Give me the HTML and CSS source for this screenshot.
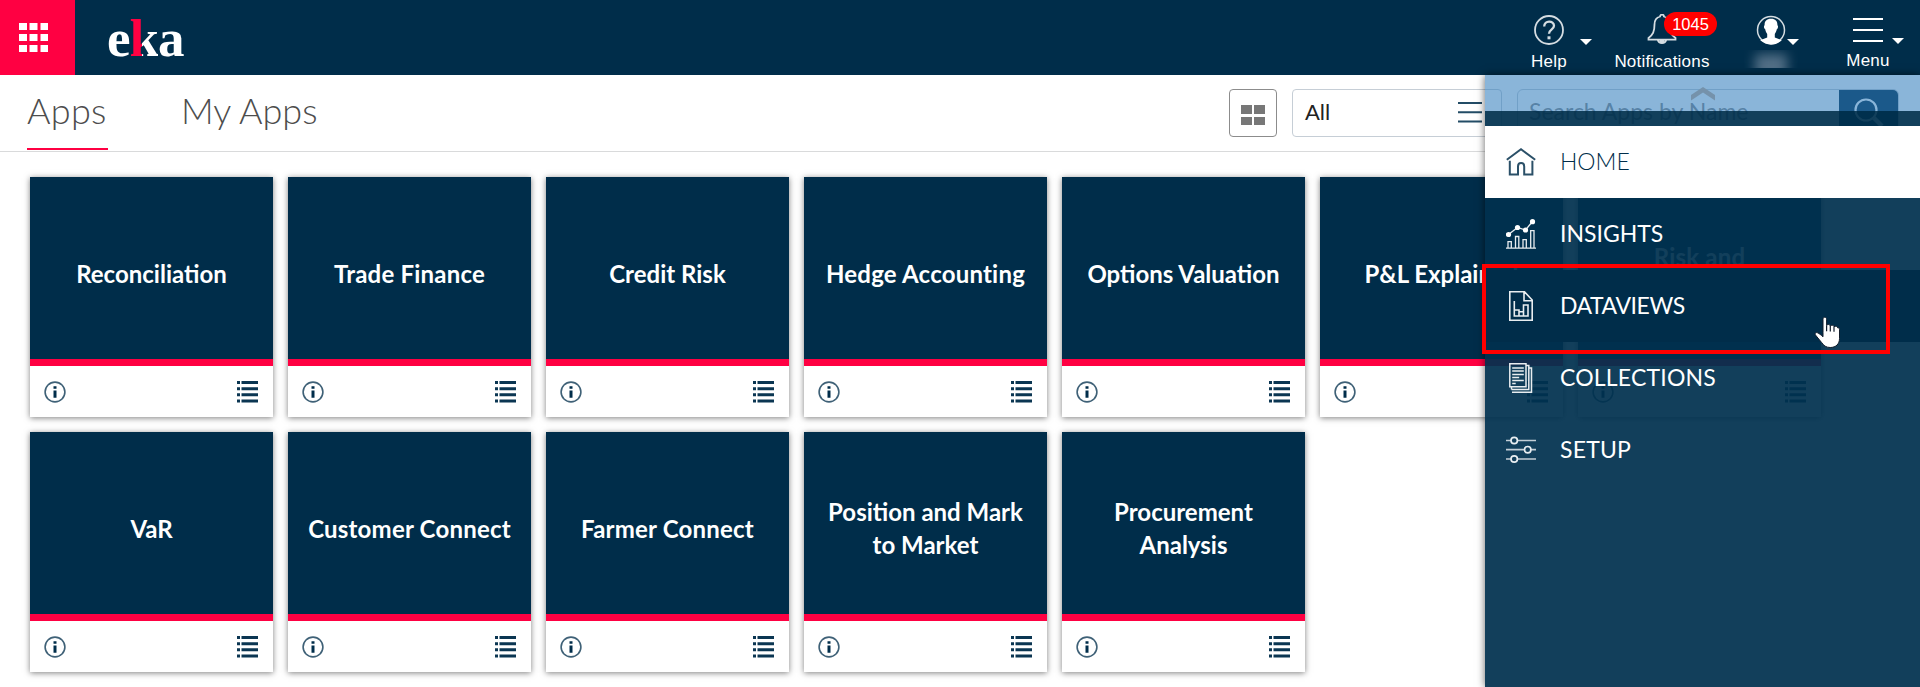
FILE: index.html
```html
<!DOCTYPE html>
<html lang="en">
<head>
<meta charset="utf-8">
<title>eka Apps</title>
<link rel="stylesheet" href="styles.css">
</head>
<body>
<svg class="defs" aria-hidden="true">
  <symbol id="info" viewBox="0 0 22 22">
    <circle cx="11" cy="11" r="9.9" fill="none" stroke="#3f6177" stroke-width="1.6"/>
    <path d="M9.500 5.200h3v2.600h-3zM9.500 9.400h3v7.400h-3z" fill="#002d4a"/>
  </symbol>
  <symbol id="list" viewBox="0 0 21 22">
    <path d="M0 0h3v3H0zM4.500 0H21v3H4.500zM0 6.200h3v3H0zM4.500 6.200H21v3H4.500zM0 12.300h3v3H0zM4.500 12.300H21v3H4.500zM0 18.500h3v3H0zM4.500 18.500H21v3H4.500z" fill="#0b3652"/>
  </symbol>
</svg>

<header class="topbar">
  <div class="launcher">
    <svg width="29" height="29" viewBox="0 0 29 29" fill="#fff"><path d="M0 0h8v7H0zM10.500 0h8v7h-8zM21.500 0H29v7h-7.500zM0 11h8v7H0zM10.500 11h8v7h-8zM21.500 11H29v7h-7.500zM0 22h8v7H0zM10.500 22h8v7h-8zM21.500 22H29v7h-7.500z"/></svg>
  </div>
  <div class="logo">e<span class="logo-k">k</span>a</div>
  <nav class="tools">
    <div class="tool tool-help">
      <div class="tool-icon">
        <svg width="30" height="30" viewBox="0 0 30 30" fill="none" stroke="#d5dde2" stroke-width="1.800"><circle cx="15" cy="15" r="14"/><path d="M10.200 11.500C10.200 5 20 5.200 20 10.800c0 3.600-5 3.500-5 8" stroke-width="2.300"/><path d="M13.500 21.300h3v3h-3z" fill="#d5dde2" stroke="none"/></svg>
        <i class="caret"></i>
      </div>
      <span>Help</span>
    </div>
    <div class="tool tool-bell">
      <div class="tool-icon">
        <svg width="30" height="30" viewBox="0 0 30 30" fill="none" stroke="#d5dde2" stroke-width="1.800"><path d="M13 2.500C13 0 17 0 17 2.500c4 1 5.500 4 5.500 8 0 7 1.500 10 6 13.500v1.700H1.500V24c4.500-3.500 6-6.500 6-13.500 0-4 1.500-7 5.500-8zM10.800 26c1 4 7.400 4 8.400 0"/><path d="M12.500 26h5v2.500h-5z" fill="#d5dde2" stroke="none"/></svg>
        <b class="badge">1045</b>
      </div>
      <span>Notifications</span>
    </div>
    <div class="tool tool-user">
      <div class="tool-icon">
        <svg width="30" height="30" viewBox="0 0 30 30"><circle cx="15" cy="15" r="13.500" fill="none" stroke="#d5dde2" stroke-width="1.500"/><path d="M15 3.800c4.700 0 6.600 2.800 6.400 6.500 1.200.8.500 3.200-.6 4-.4 2.500-1.300 3.500-2 4.700v3.500l7 2.800C22.500 28 19 29.700 15 29.700S7.500 28 4.200 25.300l7-2.800V19c-.8-1.200-1.600-2.200-2-4.700-1.200-.8-1.800-3.200-.6-4-.2-3.700 1.700-6.500 6.400-6.500z" fill="#fff"/></svg>
        <i class="caret"></i>
      </div>
      <div class="redacted"><i></i></div>
    </div>
    <div class="tool tool-menu">
      <div class="tool-icon">
        <svg width="30" height="24" viewBox="0 0 30 24" fill="#fff"><path d="M0 0h30v2H0zM0 11h30v2H0zM0 22h30v2H0z"/></svg>
        <i class="caret"></i>
      </div>
      <span>Menu</span>
    </div>
  </nav>
</header>

<section class="subbar">
  <div class="tabs">
    <a class="tab tab-active">Apps</a>
    <a class="tab tab-mine">My Apps</a>
  </div>
  <div class="filters">
    <div class="view-toggle">
      <svg width="24" height="20" viewBox="0 0 24 20" fill="#777"><path d="M0 0h11v9H0zM13 0h11v9H13zM0 12h11v8H0zM13 12h11v8H13z"/></svg>
    </div>
    <div class="select">
      <span>All</span>
      <svg width="24" height="21" viewBox="0 0 24 21" fill="#234c66"><path d="M0 0h24v2H0zM0 9.300h24v2H0zM0 18.500h24v2H0z"/></svg>
    </div>
    <div class="search">
      <span class="search-text">Search Apps by Name</span>
      <div class="search-btn">
        <svg width="30" height="30" viewBox="0 0 30 30" fill="none" stroke="#fff"><circle cx="12" cy="12" r="10.500" stroke-width="2.200"/><path d="M20 20l8 8" stroke-width="4.500"/></svg>
      </div>
    </div>
  </div>
</section>

<main class="cards">
  <article class="card"><h2>Reconciliation</h2><footer><svg class="ic-info"><use href="#info"/></svg><svg class="ic-list"><use href="#list"/></svg></footer></article>
  <article class="card wide"><h2>Trade Finance</h2><footer><svg class="ic-info"><use href="#info"/></svg><svg class="ic-list"><use href="#list"/></svg></footer></article>
  <article class="card"><h2>Credit Risk</h2><footer><svg class="ic-info"><use href="#info"/></svg><svg class="ic-list"><use href="#list"/></svg></footer></article>
  <article class="card wide"><h2>Hedge Accounting</h2><footer><svg class="ic-info"><use href="#info"/></svg><svg class="ic-list"><use href="#list"/></svg></footer></article>
  <article class="card"><h2>Options Valuation</h2><footer><svg class="ic-info"><use href="#info"/></svg><svg class="ic-list"><use href="#list"/></svg></footer></article>
  <article class="card"><h2>P&amp;L Explained</h2><footer><svg class="ic-info"><use href="#info"/></svg><svg class="ic-list"><use href="#list"/></svg></footer></article>
  <article class="card wide"><h2>Risk and<br>&nbsp;</h2><footer><svg class="ic-info"><use href="#info"/></svg><svg class="ic-list"><use href="#list"/></svg></footer></article>
  <article class="card"><h2>VaR</h2><footer><svg class="ic-info"><use href="#info"/></svg><svg class="ic-list"><use href="#list"/></svg></footer></article>
  <article class="card wide"><h2>Customer Connect</h2><footer><svg class="ic-info"><use href="#info"/></svg><svg class="ic-list"><use href="#list"/></svg></footer></article>
  <article class="card wide"><h2>Farmer Connect</h2><footer><svg class="ic-info"><use href="#info"/></svg><svg class="ic-list"><use href="#list"/></svg></footer></article>
  <article class="card"><h2>Position and Mark<br>to Market</h2><footer><svg class="ic-info"><use href="#info"/></svg><svg class="ic-list"><use href="#list"/></svg></footer></article>
  <article class="card"><h2>Procurement<br>Analysis</h2><footer><svg class="ic-info"><use href="#info"/></svg><svg class="ic-list"><use href="#list"/></svg></footer></article>
</main>

<aside class="menu">
  <div class="menu-scroll">
    <svg width="24" height="14" viewBox="0 0 24 14"><path d="M0 8L12 0l12 8v5.500L12 5.500 0 13.500z" fill="#7592ab"/></svg>
  </div>
  <ul class="menu-list">
    <li class="home">
      <svg width="30" height="30" viewBox="0 0 30 30" fill="none" stroke="#2b5068" stroke-width="2"><path d="M.8 12.700L15 2.200l14.200 10.500M3.800 13.700v13.700h8.200v-8c0-4.400 6.200-4.400 6.200 0v8h8.200V13.700"/></svg>
      <span>HOME</span>
    </li>
    <li class="insights">
      <svg width="30" height="30" viewBox="0 0 30 30" fill="none" stroke="#e8edf0" stroke-width="1.300"><path d="M0 29.200h30M2 29v-6.300h3.300V29M9.500 29V17.500h3.300V29M17 29v-8.300h3.300V29M24.700 29V11.700H28V29M2.500 15.500L11.500 8.500l8 2.500 7-8.500"/><g fill="#fff" stroke="none"><circle cx="2.500" cy="15.500" r="2.600"/><circle cx="11.500" cy="8.500" r="2.600"/><circle cx="19.500" cy="11" r="2.600"/><circle cx="26.500" cy="2.700" r="2.600"/></g></svg>
      <span>INSIGHTS</span>
    </li>
    <li class="dataviews">
      <svg width="30" height="30" viewBox="0 0 30 30" fill="none" stroke="#e8edf0" stroke-width="1.600"><path d="M3.800.8h14.700l7.700 8.200v20.200H3.800zM18 1v8.700h8M8.300 10v15H22V14h-4.500v11M8.500 19h4.500v6M13 20.700h4.500"/></svg>
      <span>DATAVIEWS</span>
    </li>
    <li class="collections">
      <svg width="30" height="30" viewBox="0 0 30 30" fill="none" stroke="#e8edf0" stroke-width="1.500"><path d="M3.800.8H20v23H3.800zM20 2.500h2.800v24H5.500M22.800 5h2.700v24.200H6M5.500 24v2.500M6.200 8h11.600M6.200 11.500h11.600M6.200 5h11.600M6.200 14.500h7M6.200 17.500h11.600M6.200 20.500h3.500"/></svg>
      <span>COLLECTIONS</span>
    </li>
    <li class="setup">
      <svg width="30" height="30" viewBox="0 0 30 30" fill="none" stroke="#c3ced6" stroke-width="1.700"><path d="M0 5.500h5M11.500 5.500H30M0 14.700h18.500M25 14.700h5M0 24h5M11.500 24H30"/><g stroke="#e8edf0"><circle cx="8.200" cy="5.500" r="3.200"/><circle cx="21.700" cy="14.700" r="3.200"/><circle cx="8.200" cy="24" r="3.200"/></g></svg>
      <span>SETUP</span>
    </li>
  </ul>
  <div class="highlight"></div>
  <svg class="cursor" width="27" height="33" viewBox="0 0 27 33"><path d="M9 16.500V3.200C9 .6 12.600.6 12.600 3.200V9.500c.8-1.400 3.300-1.300 3.700.4 1-1 3.400-.8 3.700.8 1.300-1 3.600-.4 3.800 1.200 1-.4 1.700.4 1.700 1.800v8.800c0 5.500-3.500 9-9.300 9-4.200 0-6.500-1.900-8.600-5L1.300 18.800c-.9-1.500.8-2.700 2.300-2 1.800.8 3.500 2.300 5.400 4z" fill="#fff" stroke="#111c2b" stroke-width="1"/><path d="M12.600 9.500v5.800M16.300 10v5.500M20 11v4.800" stroke="#111c2b" stroke-width="1.200"/></svg>
</aside>
</body>
</html>
```

FILE: styles.css
```css
* { box-sizing: border-box; }
body {
  margin: 0;
  width: 1920px;
  height: 687px;
  overflow: hidden;
  position: relative;
  background: #fff;
  font-family: Lato, "Open Sans", sans-serif;
}
svg { display: block; flex: none; }
.defs { position: absolute; width: 0; height: 0; }

/* Top bar */
.topbar { display: flex; height: 75px; background: #002d4a; color: #fff; }
.launcher { width: 75px; padding: 23px 0 0 19px; background: #ff0042; }
.logo {
  margin-left: 32px;
  padding-top: 8px;
  font: bold 53px/60px "Liberation Serif", serif;
  letter-spacing: -1px;
}
.logo-k {
  background: linear-gradient(90deg, #ff0042 42%, #fff 42%);
  -webkit-background-clip: text;
  background-clip: text;
  color: transparent;
}
.tools { display: flex; margin-left: auto; font: 17px/22px "Liberation Sans", sans-serif; letter-spacing: .2px; }
.tool { display: flex; flex-direction: column; align-items: center; padding-top: 14px; }
.tool-icon { position: relative; height: 37px; }
.tool-help { width: 88px; }
.tool-bell { width: 138px; }
.tool-user { width: 80px; }
.tool-menu { width: 98px; margin: 0 3px 0 8px; }
.tool-help .tool-icon, .tool-user .tool-icon { padding-top: 1px; }
.tool-menu .tool-icon { padding-top: 4px; height: 36px; }
.caret {
  position: absolute;
  top: 25px;
  border: 6px solid transparent;
  border-top-color: #fff;
  border-bottom: 0;
}
.tool-help .caret { left: 46px; }
.tool-user .caret { left: 31px; }
.tool-menu .caret { left: 39px; top: 24px; }
.badge {
  position: absolute;
  left: 17px;
  top: -2px;
  width: 53px;
  height: 24px;
  border-radius: 12px;
  background: #f00;
  font: 16.5px/25px "Liberation Sans", sans-serif;
  letter-spacing: 0;
  text-align: center;
}
.redacted { width: 54px; height: 18px; margin-top: -1px; overflow: hidden; }
.redacted i { display: block; width: 32px; height: 26px; margin: 4px auto 0; background: #526f86; filter: blur(6px); }

/* Tabs and filters */
.subbar { display: flex; justify-content: space-between; height: 77px; border-bottom: 1px solid #d9dadb; }
.tabs { display: flex; padding-left: 27px; gap: 73px; }
.tab { height: 75px; font-size: 36px; line-height: 71px; font-weight: 300; color: #4d4d4d; white-space: nowrap; }
.tab-active { width: 81px; border-bottom: 2px solid #ff0042; letter-spacing: .3px; }
.filters { display: flex; gap: 15px; padding: 14px 21px 0 0; }
.view-toggle { width: 48px; height: 48px; padding: 15px 0 0 11px; border: 1px solid #8c8c8c; border-radius: 4px; }
.select {
  display: flex;
  justify-content: space-between;
  width: 210px;
  height: 48px;
  padding: 12px 19px 0 12px;
  border: 1px solid #c6ced6;
  border-radius: 4px;
  font-size: 22px;
  line-height: 19px;
  color: #222;
}
.search { display: flex; width: 382px; height: 48px; border: 1px solid #c6ced6; border-radius: 6px; overflow: hidden; }
.search-text { flex: 1; padding-left: 11px; font-size: 23px; line-height: 42px; color: #8a8a8a; white-space: nowrap; }
.search-btn { width: 60px; margin: -1px -1px 0 0; height: 48px; padding: 9px 0 0 15px; background: #002d4a; }

/* App cards */
.cards { display: grid; grid-template-columns: repeat(7, 243px); gap: 15px; padding: 25px 0 0 30px; }
.card { height: 240px; background: #fff; box-shadow: 0 1px 6px rgba(0, 0, 0, .5); }
.card h2 {
  display: flex;
  align-items: center;
  justify-content: center;
  height: 189px;
  margin: 0;
  padding-top: 10px;
  border-bottom: 7px solid #ff0042;
  background: #002d4a;
  color: #fff;
  font-size: 24px;
  line-height: 33px;
  font-weight: 700;
  text-align: center;
  white-space: nowrap;
}
.card.wide h2 { letter-spacing: .2px; }
.card footer { display: flex; justify-content: space-between; padding: 15px 15px 0 14px; }
.ic-info { width: 22px; height: 22px; }
.ic-list { width: 21px; height: 22px; }

/* Slide-in menu, drawn over the page */
.menu {
  position: absolute;
  left: 1485px;
  top: 75px;
  width: 435px;
  height: 612px;
  box-shadow: 0 0 8px rgba(0, 0, 0, .6);
}
.menu-scroll { display: flex; justify-content: center; height: 36px; padding-top: 12px; background: rgba(48, 124, 188, .565); }
.menu-list { height: 576px; margin: 0; padding: 15px 0 0; list-style: none; background: rgba(0, 48, 79, .93); }
.menu-list li { display: flex; align-items: center; gap: 24px; height: 72px; padding-left: 21px; color: #fff; font-size: 23px; }
.menu-list span { padding-bottom: 2px; }
.menu-list .home { background: #fff; color: #002d4a; font-weight: 300; }
.menu-list .dataviews { background: #002d4a; letter-spacing: -.45px; }
.menu-list .collections, .menu-list .setup { letter-spacing: .2px; }
.highlight { position: absolute; left: -3px; top: 189px; width: 408px; height: 90px; border: 4px solid #f00; }
.cursor { position: absolute; left: 329px; top: 241px; }
```
